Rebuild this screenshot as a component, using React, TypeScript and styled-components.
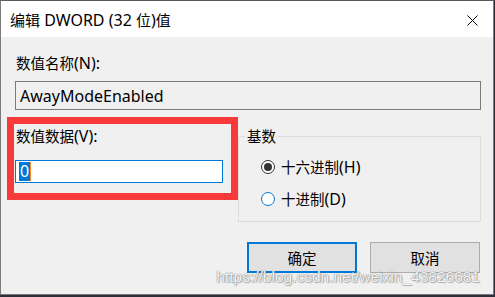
import React from "react";
import styled, { createGlobalStyle } from "styled-components";

const Global = createGlobalStyle`
  html, body { margin: 0; padding: 0; background: #2a2f3a; }
  body { width: 495px; height: 297px; overflow: hidden; }
  * { box-sizing: border-box; }
`;

const FONT = `"Noto Sans", "Noto Sans CJK SC", sans-serif`;

const Cjk = styled.span<{ $size?: number }>`
  font-family: "Noto Sans CJK SC", sans-serif;
  font-size: ${(p) => p.$size ?? 14.5}px;
`;

const Window = styled.div`
  position: relative;
  width: 494px;
  height: 295px;
  border: 1px solid #7b7b7b;
  border-top-color: #5a5a5a;
  background: #f0f0f0;
  display: flex;
  flex-direction: column;
  font-family: ${FONT};
  font-size: 16px;
  color: #000;
`;

const TitleBar = styled.div`
  height: 36px;
  background: #ffffff;
  display: flex;
  align-items: center;
  justify-content: space-between;
  padding: 0 15px 0 9px;
`;

const Title = styled.div`
  font-size: 16px;
  line-height: 22px;
  margin-top: 2px;
`;

const Close = styled.svg`
  width: 11px;
  height: 11px;
  margin-top: 2px;
`;

const Body = styled.div`
  flex: 1;
  display: flex;
  flex-direction: column;
  padding: 16px 12px 0 14px;
`;

const Label = styled.div`
  line-height: 20px;
  padding-left: 1px;
`;

const NameBox = styled.div`
  margin-top: 8px;
  height: 29px;
  border: 1px solid #7a7a7a;
  background: #f0f0f0;
  display: flex;
  align-items: center;
  padding-left: 4px;
`;

const Row = styled.div`
  display: flex;
  margin-top: 16px;
`;

const LeftCol = styled.div`
  width: 223px;
  display: flex;
  flex-direction: column;
`;

const DataBox = styled.div`
  margin-top: 14px;
  width: 208px;
  height: 23px;
  border: 1px solid #0078d7;
  background: #fff;
  display: flex;
  align-items: center;
  padding-left: 3px;
`;

const Selected = styled.span`
  background: #0078d7;
  color: #fff;
  line-height: 19px;
  padding: 0 1px;
`;

const Caret = styled.span`
  display: inline-block;
  width: 1px;
  height: 19px;
  background: #ff8a1f;
`;

const Group = styled.fieldset`
  margin: 1px 0 0 0;
  width: 243px;
  height: 95px;
  border: 1px solid #dcdcdc;
  padding: 12px 0 0 22px;
  display: flex;
  flex-direction: column;
  gap: 12px;
`;

const Legend = styled.legend`
  line-height: 18px;
  padding: 0 2px;
  margin-left: -16px;
`;

const RadioRow = styled.div`
  display: flex;
  align-items: center;
  gap: 6px;
  line-height: 20px;
`;

const RadioDot = styled.span<{ $on?: boolean }>`
  width: 14px;
  height: 14px;
  border-radius: 50%;
  border: 1px solid ${(p) => (p.$on ? "#333" : "#0078d7")};
  background: #fff;
  display: flex;
  align-items: center;
  justify-content: center;
  &::after {
    content: "";
    width: 8px;
    height: 8px;
    border-radius: 50%;
    background: ${(p) => (p.$on ? "#333" : "transparent")};
  }
`;

const Buttons = styled.div`
  display: flex;
  justify-content: flex-end;
  gap: 13px;
  margin-top: 20px;
  padding-right: 1px;
`;

const Button = styled.div<{ $primary?: boolean }>`
  width: 110px;
  height: 31px;
  background: #e1e1e1;
  border: ${(p) => (p.$primary ? "2px solid #0078d7" : "1px solid #adadad")};
  display: flex;
  align-items: center;
  justify-content: center;
`;

const RedFrame = styled.div`
  position: absolute;
  left: 6px;
  top: 116px;
  width: 231px;
  height: 83px;
  border: 7px solid #f93a3a;
  pointer-events: none;
`;

const Watermark = styled.div`
  position: absolute;
  right: 13px;
  top: 266px;
  font-family: "Liberation Sans", Arial, sans-serif;
  font-size: 15.5px;
  line-height: 20px;
  color: rgba(255, 255, 255, 0.92);
  text-shadow: 0 0 1px #8c8c8c, 0 0 1px #8c8c8c, 1px 1px 1px rgba(120, 120, 120, 0.5);
  pointer-events: none;
`;

export default function App() {
  return (
    <>
      <Global />
      <Window>
        <TitleBar>
          <Title>
            <Cjk $size={15}>编辑</Cjk> DWORD (32 <Cjk $size={15}>位</Cjk>)<Cjk $size={15}>值</Cjk>
          </Title>
          <Close viewBox="0 0 11 11">
            <path d="M0.5 0.5 L10.5 10.5 M10.5 0.5 L0.5 10.5" stroke="#000" strokeWidth="1" fill="none" />
          </Close>
        </TitleBar>
        <Body>
          <Label>
            <Cjk>数值名称</Cjk>(N):
          </Label>
          <NameBox>AwayModeEnabled</NameBox>
          <Row>
            <LeftCol>
              <Label>
                <Cjk>数值数据</Cjk>(V):
              </Label>
              <DataBox>
                <Selected>0</Selected>
                <Caret />
              </DataBox>
            </LeftCol>
            <Group>
              <Legend>
                <Cjk>基数</Cjk>
              </Legend>
              <RadioRow>
                <RadioDot $on />
                <span>
                  <Cjk>十六进制</Cjk>(H)
                </span>
              </RadioRow>
              <RadioRow>
                <RadioDot />
                <span>
                  <Cjk>十进制</Cjk>(D)
                </span>
              </RadioRow>
            </Group>
          </Row>
          <Buttons>
            <Button $primary>
              <Cjk>确定</Cjk>
            </Button>
            <Button>
              <Cjk>取消</Cjk>
            </Button>
          </Buttons>
        </Body>
        <RedFrame />
        <Watermark>https://blog.csdn.net/weixin_43826681</Watermark>
      </Window>
    </>
  );
}
